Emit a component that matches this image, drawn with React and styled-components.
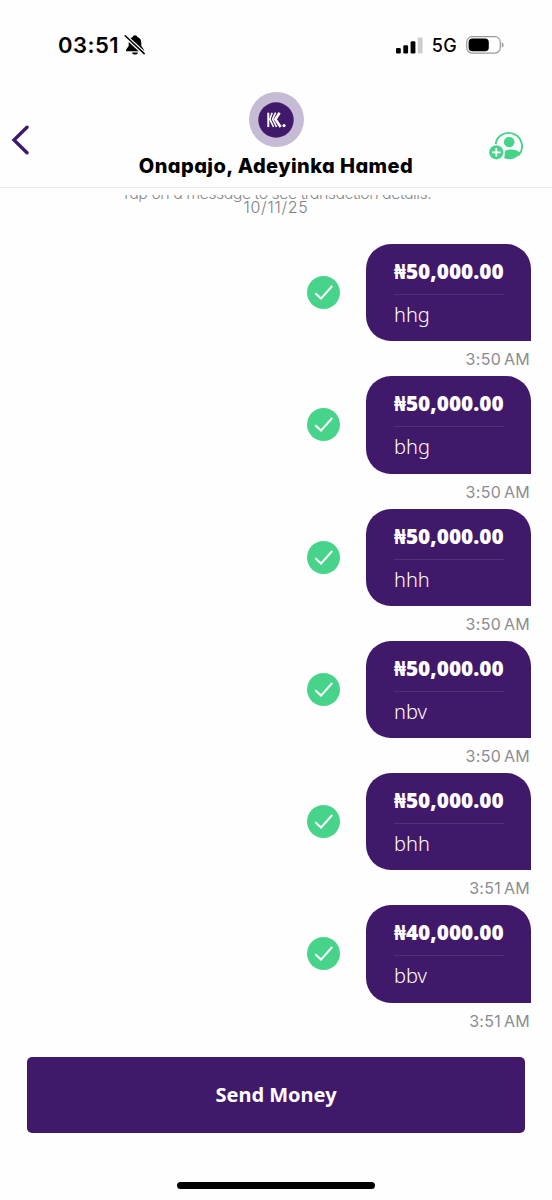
import React from 'react';
import styled, { createGlobalStyle } from 'styled-components';

const messages = [
  { id: 1, amount: '₦50,000.00', note: 'hhg', time: '3:50 AM' },
  { id: 2, amount: '₦50,000.00', note: 'bhg', time: '3:50 AM' },
  { id: 3, amount: '₦50,000.00', note: 'hhh', time: '3:50 AM' },
  { id: 4, amount: '₦50,000.00', note: 'nbv', time: '3:50 AM' },
  { id: 5, amount: '₦50,000.00', note: 'bhh', time: '3:51 AM' },
  { id: 6, amount: '₦40,000.00', note: 'bbv', time: '3:51 AM' },
];

export default function App() {
  return (
    <Screen>
      <GlobalStyle />
      <StatusBar>
        <Clock>03:51</Clock>
        <BellOffIcon />
        <Spacer />
        <SignalIcon />
        <Network>5G</Network>
        <BatteryIcon />
      </StatusBar>
      <Header>
        <BackButton aria-label='Back'>
          <svg width='18' height='30' viewBox='0 0 18 30'>
            <path
              d='M16 2.2 3 15l13 12.8'
              fill='none'
              stroke='#41196b'
              strokeWidth='3.4'
              strokeLinecap='round'
              strokeLinejoin='miter'
            />
          </svg>
        </BackButton>
        <Contact>
          <Avatar>
            <KLogo />
          </Avatar>
          <ContactName>Onapajo, Adeyinka Hamed</ContactName>
        </Contact>
        <AddButton aria-label='Add beneficiary'>
          <AddUserIcon />
        </AddButton>
      </Header>
      <Thread>
        <Hint>Tap on a message to see transaction details.</Hint>
        <DateLabel>10/11/25</DateLabel>
        {messages.map((message) => (
          <Message key={message.id} {...message} />
        ))}
      </Thread>
      <Footer>
        <SendButton>Send Money</SendButton>
        <HomeIndicator />
      </Footer>
    </Screen>
  );
}

function Message({ amount, note, time }) {
  return (
    <MessageItem>
      <MessageRow>
        <svg width='33' height='33' viewBox='0 0 33 33'>
          <circle cx='16.5' cy='16.5' r='16.5' fill='#48d38a' />
          <path
            d='M8.3 17.2 14 22.6 25.2 10'
            fill='none'
            stroke='#fff'
            strokeWidth='2'
          />
        </svg>
        <Bubble>
          <Amount>{amount}</Amount>
          <Note>{note}</Note>
        </Bubble>
      </MessageRow>
      <Time>{time}</Time>
    </MessageItem>
  );
}

function BellOffIcon() {
  return (
    <svg width='22' height='22' viewBox='0 0 22 22'>
      <path
        d='M11 1.2c-1.3 0-2.2.8-2.4 1.9C5.8 4 4.7 6.2 4.7 9v2.5c0 1.5-2.7 3.2-2.7 4.9 0 .6.5.9 1.2.9h15.6c.7 0 1.2-.3 1.2-.9 0-1.7-2.7-3.4-2.7-4.9V9c0-2.8-1.1-5-3.9-5.9-.2-1.1-1.1-1.9-2.4-1.9Z'
        fill='#000'
      />
      <path d='M8 18.4h6c-.3 1.3-1.4 2.1-3 2.1s-2.7-.8-3-2.1Z' fill='#000' />
      <path d='M1 1.6 20.5 20' stroke='#fefefe' strokeWidth='4' />
      <path d='M1.2 1.8 20.2 19.6' stroke='#000' strokeWidth='1.5' strokeLinecap='round' />
    </svg>
  );
}

function SignalIcon() {
  return (
    <svg width='27' height='17' viewBox='0 0 27 17'>
      <rect x='0' y='11' width='4.8' height='5.5' rx='1.3' />
      <rect x='7.3' y='8.3' width='4.8' height='8.2' rx='1.3' />
      <rect x='14.6' y='4.3' width='4.8' height='12.2' rx='1.3' />
      <rect x='21.8' y='0.5' width='4.8' height='16' rx='1.3' fill='#ccc' />
    </svg>
  );
}

function BatteryIcon() {
  return (
    <svg width='38' height='18' viewBox='0 0 38 18'>
      <rect x='0.7' y='0.7' width='33.6' height='16.4' rx='5.5' fill='none' stroke='#999' strokeWidth='1.2' />
      <rect x='2.6' y='2.6' width='20.2' height='12.6' rx='3.8' />
      <path d='M35.8 6.3c1.1.4 1.7 1.3 1.7 2.6s-.6 2.2-1.7 2.6Z' fill='#999' />
    </svg>
  );
}

function KLogo() {
  return (
    <svg width='36' height='36' viewBox='0 0 36 36'>
      <circle cx='18' cy='18' r='17.7' fill='#41196b' />
      <g fill='none' stroke='#fff'>
        <path d='M10.3 10.7v14.3' strokeWidth='2' />
        <path d='M14.2 10.7l-2.4 6.5 3.8 7.8' strokeWidth='1.6' />
        <path d='M17.6 10.7l-3 6.5 4 7.8' strokeWidth='1.6' />
        <path d='M21.6 10.7l-4.2 6.5 5.2 7.8' strokeWidth='2.6' />
      </g>
      <circle cx='26' cy='23.6' r='1.6' fill='#fff' />
    </svg>
  );
}

function AddUserIcon() {
  return (
    <svg width='36' height='32' viewBox='0 0 36 32'>
      <path
        d='M6.6 14.1A13.3 13.3 0 1 1 29.4 25.4'
        fill='none'
        stroke='#48d38a'
        strokeWidth='1.9'
      />
      <circle cx='20.2' cy='12' r='5.3' fill='#48d38a' />
      <path
        d='M15.6 22.3c.2-1.7 2.1-2.8 6.4-2.8 3.8 0 7.3 1.2 9.4 3.3-2 3.6-5.9 6.5-10.9 6.5-2.1 0-3.9-.4-5.5-1.2.7-1.6.9-3.7.6-5.8Z'
        fill='#48d38a'
      />
      <circle cx='7.3' cy='22.3' r='7.1' fill='#48d38a' />
      <path d='M7.3 18v8.6M3 22.3h8.6' stroke='#fff' strokeWidth='1.7' />
    </svg>
  );
}

// |-----Styling-----|
const GlobalStyle = createGlobalStyle`
  * {
    box-sizing: border-box;
  }

  body {
    margin: 0;
    background: #fefefe;
  }

  svg {
    display: block;
    flex-shrink: 0;
  }

  button {
    padding: 0;
    border: 0;
    background: none;
  }
`;

const Screen = styled.div`
  display: flex;
  flex-direction: column;
  height: 1200px;
  overflow: hidden;
  color: #000;
  background: #fefefe;
  font-family: Inter, 'Open Sans', sans-serif;
  font-feature-settings: 'cv11';
`;

const StatusBar = styled.div`
  display: flex;
  align-items: center;
  height: 90px;
  padding: 0 48px 0 58px;
`;

const Clock = styled.span`
  width: 66px;
  font-size: 22px;
  font-weight: 600;
  letter-spacing: 0.5px;
`;

const Spacer = styled.div`
  flex: 1;
`;

const Network = styled.span`
  margin: 0 9px;
  font-size: 18px;
  font-weight: 500;
  letter-spacing: 0.3px;
`;

const Header = styled.header`
  display: flex;
  justify-content: space-between;
  height: 98px;
  padding: 0 27px 0 11px;
  border-bottom: 1px solid #ebebeb;
`;

const BackButton = styled.button`
  align-self: flex-start;
  width: 52px;
  margin-top: 35px;
`;

const Contact = styled.div`
  display: flex;
  flex-direction: column;
  align-items: center;
  padding-top: 2px;
`;

const Avatar = styled.div`
  display: grid;
  place-items: center;
  width: 55px;
  height: 55px;
  border-radius: 50%;
  background: #c5bbd4;
`;

const ContactName = styled.h1`
  margin: 7px 0 0;
  font-size: 20px;
  line-height: 24px;
  font-weight: 800;
  letter-spacing: 0.43px;
  white-space: nowrap;
`;

const AddButton = styled.button`
  align-self: flex-start;
  margin-top: 40px;
`;

const Thread = styled.main`
  display: flex;
  flex-direction: column;
  height: 841px;
  margin-top: 7px;
  padding-right: 21px;
  overflow: hidden;
`;

const Hint = styled.p`
  flex: none;
  margin: -12px -21px 0 0;
  font-size: 16px;
  line-height: 20px;
  letter-spacing: -0.55px;
  color: #8a8a8a;
  text-align: center;
  font-weight: 300;
`;

const DateLabel = styled.p`
  flex: none;
  height: 40px;
  margin: -6px -21px 7px 0;
  font-size: 16px;
  line-height: 20px;
  letter-spacing: 0.75px;
  color: #808080;
  text-align: center;
  font-weight: 300;
`;

const MessageItem = styled.article`
  flex: none;
  height: 132.27px;
`;

const MessageRow = styled.div`
  display: flex;
  align-items: center;
  justify-content: flex-end;
  gap: 26px;
`;

const Bubble = styled.div`
  width: 165px;
  height: 97.3px;
  padding: 14px 27px 0 28px;
  border-radius: 25px 25px 0 25px;
  color: #fff;
  background: #41196b;
  font-family: 'Noto Sans', sans-serif;
`;

const Amount = styled.div`
  height: 37px;
  border-bottom: 1px solid #553078;
  font-family: 'Open Sans', 'Noto Sans', sans-serif;
  font-size: 20.8px;
  line-height: 26px;
  font-weight: 800;
  white-space: nowrap;
`;

const Note = styled.div`
  padding-top: 7px;
  font-size: 20px;
  line-height: 26px;
  font-weight: 300;
`;

const Time = styled.div`
  padding: 8px 1px 0 0;
  font-size: 16px;
  line-height: 20px;
  letter-spacing: 0.3px;
  word-spacing: -2px;
  color: #8c8c90;
  text-align: right;
`;

const Footer = styled.footer`
  display: flex;
  flex-direction: column;
  align-items: center;
  padding: 21px 27px 0;
`;

const SendButton = styled.button`
  flex: none;
  width: 100%;
  height: 76px;
  padding-bottom: 1px;
  border-radius: 5px;
  color: #fff;
  background: #41196b;
  font-family: 'Noto Sans', sans-serif;
  font-size: 20px;
  font-weight: 700;
`;

const HomeIndicator = styled.div`
  width: 198px;
  height: 7px;
  margin-top: 49px;
  border-radius: 4px;
  background: #000;
`;
